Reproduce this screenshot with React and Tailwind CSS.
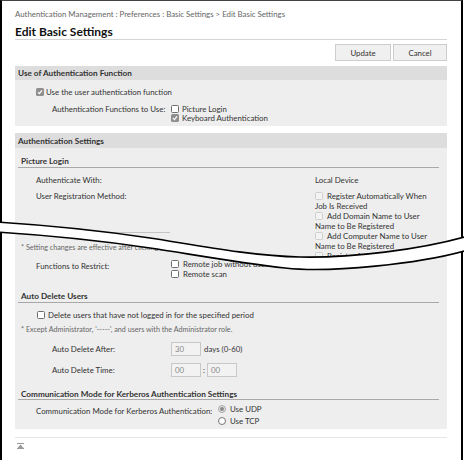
import React from "react";

function Check() {
  return (
    <span className="inline-flex w-[8px] h-[8px] rounded-[1.5px] bg-[#8f8f8f] items-center justify-center shrink-0">
      <svg width="6" height="6" viewBox="0 0 6 6">
        <path d="M1 3.2 L2.4 4.6 L5 1.4" stroke="#fff" strokeWidth="1.2" fill="none" />
      </svg>
    </span>
  );
}
function Box() {
  return <span className="inline-block w-[8px] h-[8px] rounded-[1.5px] border border-[#6e6e6e] bg-white shrink-0" />;
}
function DisBox() {
  return <span className="inline-block w-[8px] h-[8px] rounded-[1.5px] border border-[#cfcfcf] bg-[#f3f3f3] shrink-0 align-[-1px]" />;
}

const TOP = "M-4 222 C 60 226, 110 232, 150 238 S 250 256, 300 257 S 420 250, 468 236";
const BOTTOM = "M-4 232 C 60 236, 110 242, 150 248 S 240 263, 285 268 S 420 264, 468 250";
const FILL =
  "M-4 222 C 60 226, 110 232, 150 238 S 250 256, 300 257 S 420 250, 468 236 L 468 250 C 420 264, 330 273, 285 268 C 240 263, 190 254, 150 248 C 110 242, 60 236, -4 232 Z";

export default function App() {
  return (
    <div className="w-[464px] h-[460px] bg-white relative overflow-hidden font-['Lato',sans-serif] text-[7.85px] leading-[10px] text-[#333]">
      <div className="w-[463px] h-[460px] border-l-2 border-r-2 border-t border-l-black border-r-black border-t-[#444] pl-[13px] pr-[14px]">
        {/* breadcrumb */}
        <div className="pt-[7px] leading-[12px] text-[#666] whitespace-nowrap">
          Authentication Management : Preferences : Basic Settings &gt; Edit Basic Settings
        </div>
        <div className="mt-[4px] h-[16px] leading-[15px] text-[12px] font-bold text-[#111] border-b border-[#d4d4d4]">
          Edit Basic Settings
        </div>
        <div className="mt-[4px] flex justify-end gap-[2px]">
          <div className="w-[56px] h-[17px] border border-[#cdcdcd] bg-[#f0f0f0] flex items-center justify-center">Update</div>
          <div className="w-[54px] h-[17px] border border-[#cdcdcd] bg-[#f0f0f0] flex items-center justify-center">Cancel</div>
        </div>

        {/* section 1 */}
        <div className="mt-[5px]">
          <div className="h-[14px] bg-[#dddddd] pl-[3px] flex items-center font-bold text-[8.2px]">Use of Authentication Function</div>
          <div className="h-[46px] bg-[#eeeeee] pt-[7px]">
            <div className="flex items-center gap-[2px] pl-[21px]">
              <Check />
              <span>Use the user authentication function</span>
            </div>
            <div className="mt-[7px] flex pl-[37px]">
              <div className="w-[119px] whitespace-nowrap">Authentication Functions to Use:</div>
              <div className="flex flex-col">
                <div className="flex items-center gap-[3px] h-[9px]">
                  <Box />
                  <span>Picture Login</span>
                </div>
                <div className="flex items-center gap-[3px] h-[9px]">
                  <Check />
                  <span>Keyboard Authentication</span>
                </div>
              </div>
            </div>
          </div>
        </div>

        {/* section 2 */}
        <div className="mt-[7px]">
          <div className="h-[15px] bg-[#dddddd] pl-[3px] flex items-center font-bold text-[8.2px]">Authentication Settings</div>
          <div className="bg-[#eeeeee] pb-[2px]">
            {/* top portion (clipped) */}
            <div className="h-[114px] overflow-hidden pt-[8px]">
              <div className="ml-[3px] mr-[8px] border-b border-[#a8a8a8] h-[12px] pl-[3px] font-bold text-[8.2px] leading-[11px]">Picture Login</div>
              <div className="mt-[7px] flex pl-[21px]">
                <div className="w-[279px]">Authenticate With:</div>
                <div>Local Device</div>
              </div>
              <div className="mt-[6px] flex pl-[21px]">
                <div className="w-[279px]">User Registration Method:</div>
                <div className="flex flex-col whitespace-nowrap">
                  <div><DisBox /> <span className="ml-[2px]">Register Automatically When</span><br />Job Is Received</div>
                  <div><DisBox /> <span className="ml-[2px]">Add Domain Name to User</span><br />Name to Be Registered</div>
                  <div><DisBox /> <span className="ml-[2px]">Add Computer Name to User</span><br />Name to Be Registered</div>
                  <div><DisBox /> <span className="ml-[2px]">Register Automatically</span></div>
                </div>
              </div>
            </div>
            {/* bottom portion */}
            <div className="relative -mt-[30px]">
              <div className="ml-[5px] w-[150px] border-t border-[#c4c4c4]" />
              <div className="mt-[10px] pl-[6px] w-[212px] overflow-hidden whitespace-nowrap text-[7.2px] text-[#666]">
                * Setting changes are effective after clicking [Update].
              </div>
              <div className="mt-[6px] flex pl-[21px]">
                <div className="w-[135px] pt-[2px]">Functions to Restrict:</div>
                <div className="flex flex-col">
                  <div className="flex items-center gap-[4px]"><Box /><span className="whitespace-nowrap">Remote job without user authentication</span></div>
                  <div className="flex items-center gap-[4px]"><Box /><span>Remote scan</span></div>
                </div>
              </div>

              <div className="mt-[12px] ml-[3px] mr-[8px] border-b border-[#a8a8a8] h-[12px] pl-[3px] font-bold text-[8.2px] leading-[11px]">Auto Delete Users</div>
              <div className="mt-[7px] flex items-center gap-[3px] pl-[22px]">
                <Box />
                <span>Delete users that have not logged in for the specified period</span>
              </div>
              <div className="mt-[5px] pl-[6px] text-[7.2px] text-[#666]">
                * Except Administrator, '-----', and users with the Administrator role.
              </div>
              <div className="mt-[7px] flex items-center pl-[37px]">
                <div className="w-[119px]">Auto Delete After:</div>
                <div className="w-[30px] h-[14px] border border-[#c8c8c8] bg-[#f2f2f2] text-[#888] pl-[3px] flex items-center">30</div>
                <span className="ml-[3px]">days (0-60)</span>
              </div>
              <div className="mt-[7px] flex items-center pl-[37px]">
                <div className="w-[119px]">Auto Delete Time:</div>
                <div className="w-[30px] h-[14px] border border-[#c8c8c8] bg-[#f2f2f2] text-[#888] pl-[3px] flex items-center">00</div>
                <span className="mx-[2px]">:</span>
                <div className="w-[30px] h-[14px] border border-[#c8c8c8] bg-[#f2f2f2] text-[#888] pl-[3px] flex items-center">00</div>
              </div>

              <div className="mt-[12px] ml-[3px] mr-[8px] border-b border-[#a8a8a8] h-[11px] pl-[3px] font-bold text-[8.2px] leading-[10px] whitespace-nowrap">Communication Mode for Kerberos Authentication Settings</div>
              <div className="mt-[3px] flex pl-[21px]">
                <div className="w-[182px] pt-[3px] whitespace-nowrap">Communication Mode for Kerberos Authentication:</div>
                <div className="flex flex-col">
                  <div className="flex items-center gap-[4px] h-[12px]">
                    <span className="w-[8px] h-[8px] rounded-full border border-[#aaa] bg-[#e4e4e4] flex items-center justify-center">
                      <span className="w-[4px] h-[4px] rounded-full bg-[#8a8a8a]" />
                    </span>
                    <span>Use UDP</span>
                  </div>
                  <div className="flex items-center gap-[4px] h-[12px]">
                    <span className="w-[8px] h-[8px] rounded-full border border-[#777] bg-white" />
                    <span>Use TCP</span>
                  </div>
                </div>
              </div>
            </div>
          </div>
        </div>

        <div className="mt-[8px] border-t border-[#e6e6e6]" />
        <div className="mt-[5px] pl-[2px]">
          <svg width="7" height="6" viewBox="0 0 7 6">
            <rect x="0" y="0" width="7" height="1" fill="#9a9a9a" />
            <path d="M3.5 1.5 L6.5 5 L0.5 5 Z" fill="#9a9a9a" />
            <rect x="0" y="5" width="7" height="1" fill="#9a9a9a" />
          </svg>
        </div>
      </div>

      {/* torn-page break */}
      <svg className="absolute left-0 top-0 pointer-events-none" width="464" height="460" viewBox="0 0 464 460">
        <path d={FILL} fill="#fff" />
        <path d={TOP} stroke="#000" strokeWidth="1.6" fill="none" />
        <path d={BOTTOM} stroke="#000" strokeWidth="1.6" fill="none" />
      </svg>
    </div>
  );
}
